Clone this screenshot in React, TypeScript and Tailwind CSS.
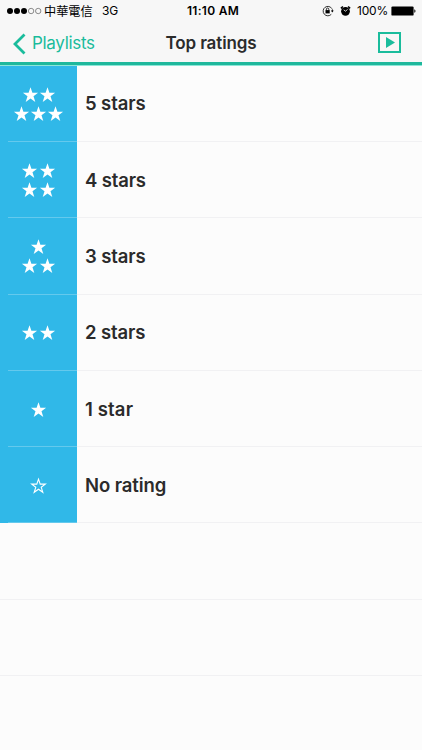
import clsx from "clsx";

interface StarProps {
  outline?: boolean;
}

interface RatingRow {
  label: string;
  stars: number[];
  tracking: string;
  outline?: boolean;
}

const ratings: RatingRow[] = [
  { label: "5 stars", stars: [2, 3], tracking: "tracking-[-0.1px]" },
  { label: "4 stars", stars: [2, 2], tracking: "tracking-[-0.15px]" },
  { label: "3 stars", stars: [1, 2], tracking: "tracking-[-0.1px]" },
  { label: "2 stars", stars: [2], tracking: "tracking-[-0.1px]" },
  { label: "1 star", stars: [1], tracking: "tracking-[0.15px]" },
  {
    label: "No rating",
    stars: [1],
    tracking: "tracking-[-0.1px]",
    outline: true,
  },
];

const Star: React.FC<StarProps> = ({ outline = false }) => {
  return (
    <svg className="block size-4 overflow-visible" viewBox="-0.5 0 16 16">
      <path
        d="M8 .3 9.9 5.8h5.7l-4.6 3.5 1.8 5.6L8 11.5l-4.8 3.4 1.8-5.6L.4 5.8h5.7Z"
        fill={outline ? "none" : "white"}
        stroke={outline ? "white" : "none"}
        strokeWidth="1.2"
        transform={outline ? "translate(.8 .9) scale(.9)" : undefined}
      />
    </svg>
  );
};

const StatusBar = () => {
  return (
    <div className="flex h-[22px] items-center pl-[7px] pr-[6px] text-black">
      <svg className="h-[8px] w-[35px]" viewBox="0 0 35 8">
        {[3, 10, 17].map((x) => (
          <circle key={x} cx={x} cy="4" r="3" />
        ))}
        {[24.1, 31.2].map((x) => (
          <circle
            key={x}
            cx={x}
            cy="4"
            r="2.7"
            fill="none"
            stroke="#444"
            strokeWidth=".6"
          />
        ))}
      </svg>
      <span className="ml-[2px] w-[49px] whitespace-nowrap font-['Noto_Sans_CJK_TC',sans-serif] text-[12.2px] leading-[22px]">
        中華電信
      </span>
      <span className="ml-[9px] w-[17px] text-[12px] tracking-[-0.2px]">
        3G
      </span>
      <span className="ml-[68px] w-[54px] whitespace-nowrap text-[12px] font-semibold tracking-[0.3px]">
        11:10 AM
      </span>
      <svg className="ml-auto h-[12px] w-[12px]" viewBox="0 0 12 12">
        <path
          d="M9.9 3.7A4.7 4.7 0 1 0 9.3 9.3M10.4 4.3v2"
          fill="none"
          stroke="black"
          strokeWidth=".8"
        />
        <path d="M8.9 5.4h2.8l-1.4 2Z" />
        <rect x="3.5" y="5.1" width="4.2" height="3.3" />
        <path
          d="M4.4 5.5V4.2a1.2 1.2 0 0 1 2.4 0v1.3"
          fill="none"
          stroke="black"
          strokeWidth=".8"
        />
      </svg>
      <svg className="ml-[6px] h-[12px] w-[11px]" viewBox="0 0 11 12">
        <circle cx="5.5" cy="6.3" r="4.4" />
        <path
          d="M.9 3.3 2.9 1.5M10.1 3.3 8.1 1.5"
          stroke="black"
          strokeWidth="1.6"
        />
        <path
          d="M3.7 4.8 5.5 6.2 7.6 4.4"
          fill="none"
          stroke="white"
          strokeWidth=".8"
        />
      </svg>
      <span className="ml-[6px] w-[31px] whitespace-nowrap text-[12px] tracking-[-0.2px]">
        100%
      </span>
      <svg className="ml-[3px] h-[10px] w-[25px]" viewBox="0 0 25 10">
        <rect x=".4" y=".4" width="22.2" height="9.2" rx="1.2" />
        <path d="M23.3 3.2c1.6.4 1.6 3.2 0 3.6Z" />
      </svg>
    </div>
  );
};

const NavBar = () => {
  return (
    <div className="grid h-10 grid-cols-[1fr_92px_1fr] items-center pt-[3px]">
      <button className="flex items-center pl-[13px] text-[#1abc9c]">
        <svg className="h-[22px] w-[13px]" viewBox="0 0 13 22">
          <path
            d="M11.5 1.5 2 11l9.5 9.5"
            fill="none"
            stroke="currentColor"
            strokeWidth="2.8"
          />
        </svg>
        <span className="ml-[6px] text-[17px] tracking-[-0.3px]">
          Playlists
        </span>
      </button>
      <h1 className="whitespace-nowrap text-center text-[17px] font-semibold tracking-[-0.1px] text-[#2b2b2b]">
        Top ratings
      </h1>
      <button className="ml-auto mr-[21px] -mt-[3px] text-[#1abc9c]">
        <svg className="block h-[21px] w-[23px]" viewBox="0 0 23 21">
          <rect
            x="1"
            y="1"
            width="21"
            height="19"
            fill="none"
            stroke="currentColor"
            strokeWidth="2"
          />
          <path d="M8 5v11l9-5.5Z" fill="currentColor" />
        </svg>
      </button>
    </div>
  );
};

const App = () => {
  return (
    <div className="flex h-[750px] w-full flex-col overflow-hidden bg-[#fcfcfc] font-[Inter,sans-serif]">
      <header className="relative h-[65px] shrink-0 border-b-[3px] border-[#1fb89c] bg-[#f7f7f7] shadow-[0_1px_0_#8ce6d8]">
        <StatusBar />
        <NavBar />
      </header>
      <ul>
        {ratings.map(({ label, stars, tracking, outline }, row) => (
          <li
            key={label}
            className={clsx("flex", row === 0 ? "h-[77px]" : "h-[76.3px]")}
          >
            <div className="flex w-[76.5px] flex-col bg-[#30b8e8]">
              <div className="flex flex-1 flex-col items-center justify-center gap-[3px] pt-[2px]">
                {stars.map((count, i) => (
                  <div
                    key={i}
                    className={clsx(
                      "flex",
                      label === "5 stars" ? "gap-px" : "gap-[2px]"
                    )}
                  >
                    {Array.from({ length: count }, (_, n) => (
                      <Star key={n} outline={outline} />
                    ))}
                  </div>
                ))}
              </div>
              <div className="ml-2 h-px bg-[#64c9ed]" />
            </div>
            <div
              className={clsx(
                "flex flex-1 items-center border-b border-[#f1f1f3] pl-[8.5px] pt-[2px] text-[18.5px] font-semibold text-[#2b2b2b]",
                tracking
              )}
            >
              {label}
            </div>
          </li>
        ))}
        {[0, 1].map((n) => (
          <li key={n} className="h-[76.3px] border-b border-[#f1f1f3]" />
        ))}
      </ul>
    </div>
  );
};

export default App;
